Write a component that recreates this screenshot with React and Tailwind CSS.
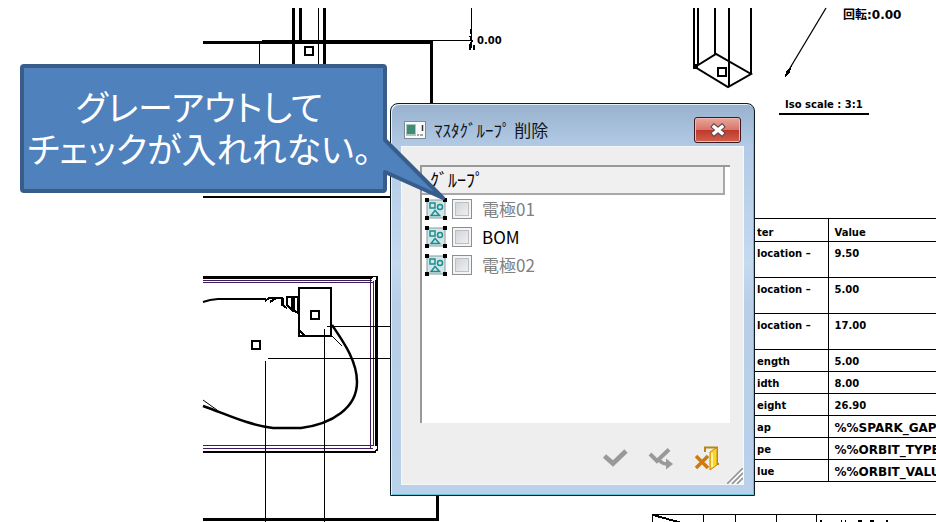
const parameters = [
  ["location –", "9.50", true],
  ["location –", "5.00", true],
  ["location –", "17.00", true],
  ["ength", "5.00", false],
  ["idth", "8.00", false],
  ["eight", "26.90", false],
  ["ap", "%%SPARK_GAP", false],
  ["pe", "%%ORBIT_TYPE", false],
  ["lue", "%%ORBIT_VALU", false],
];

const groups = [
  { id: "g1", name: "電極01", disabled: true },
  { id: "g2", name: "BOM", disabled: false },
  { id: "g3", name: "電極02", disabled: true },
];

function Drawing() {
  return (
    <svg
      className="absolute left-0 top-0"
      width="936"
      height="522"
      viewBox="0 0 936 522"
      fill="none"
      stroke="#000"
      shapeRendering="crispEdges"
      aria-hidden="true"
    >
      {/* front view */}
      <path d="M293.5 8V66M300.5 8V42M324.5 8V66M431.5 41V104" strokeWidth="3" />
      <path d="M318.5 8V66M259.5 42V66M432 40.5H472M471.5 8V48" strokeWidth="1" />
      <path d="M203 42.5H262" strokeWidth="3" />
      <path d="M262 42H433" strokeWidth="4" />
      <path d="M471 29v5M470 36l2 5M472 41l-2 4M470 45v5M474 45v5" strokeWidth="2" />
      <rect x="305" y="47" width="8" height="8" strokeWidth="2" />
      {/* top view */}
      <path d="M203 197H390" strokeWidth="2" />
      <path d="M203 277.5H376.5V451" strokeWidth="3" />
      <path d="M203 452H376" strokeWidth="2" />
      <path d="M203 280.5H375M203 282.5H373M203 445.5H373M203 448.5H375M370.5 279V448M373.5 281V446" stroke="#3f1a5c" strokeWidth="1" />
      <circle cx="374" cy="279" r="2" fill="#fff" stroke="none" />
      <circle cx="375" cy="448" r="2" fill="#fff" stroke="none" />
      <path d="M203 302L210 300L218 299H266" strokeWidth="2" shapeRendering="auto" />
      <path d="M265 301l4-3h13v7l5 3M276 298l-6 4M283 298v8M287 297h5v13l-5-5zM292 297h6M294 298v14M298 296v17l-7-4" strokeWidth="2" />
      <rect x="299" y="288" width="32" height="48" strokeWidth="2" />
      <path d="M299 330l6 6" strokeWidth="2" />
      <rect x="311" y="311" width="8" height="8" strokeWidth="2" />
      <rect x="252" y="341" width="8" height="8" strokeWidth="2" />
      <path d="M332 325C342 340 357 360 357 382C357 408 332 424 301 428H273C248 425 226 414 203 406" strokeWidth="2.5" shapeRendering="auto" />
      <path d="M203 400L217 410M331 335L342 346" strokeWidth="1" shapeRendering="auto" />
      <path d="M327 326.5H390M268 358.5H390M324.5 329V522M265.5 361V522" strokeWidth="1" />
      <path d="M203 519.5H437.5V496" strokeWidth="3" />
      {/* isometric view */}
      <path d="M694 8V66M698 8V65M715 8V54M728.5 8V86M751 8V74" strokeWidth="2" />
      <path d="M695 67L716 54L751 74L728 87Z" strokeWidth="2" shapeRendering="auto" />
      <path d="M693 64h5v5h-5z" fill="#000" stroke="none" />
      <rect x="718" y="68" width="8" height="8" strokeWidth="2" />
      <path d="M826 8L790 68" strokeWidth="1.3" shapeRendering="auto" />
      <path d="M792 66L786 71L785 77L790 72Z" fill="#000" stroke="none" />
      {/* title block */}
      <path d="M652 514.5H936M652.5 514V522M703.5 514V522M735.5 514V522M776.5 514V522M816.5 514V522" strokeWidth="1" />
      <path d="M653 515L682 523" strokeWidth="2" />
      <path d="M820 521h2M841 521h1M845 521h1M858 521h4M870 521h4M886 521h2" strokeWidth="2" />
    </svg>
  );
}

function GroupIcon() {
  return (
    <svg width="22" height="22" viewBox="0 0 22 22" aria-hidden="true">
      <rect x="2" y="2" width="18" height="18" fill="#d3e5e6" stroke="#8a9a9c" />
      <g fill="none" stroke="#1a8f92" strokeWidth="1.5">
        <rect x="5" y="5" width="5" height="5" />
        <circle cx="15" cy="9" r="2.5" />
        <path d="M10 12.5L6 17.5H14.5Z" />
      </g>
      <path d="M0 0h4v4H0zM18 0h4v4h-4zM0 18h4v4H0zM18 18h4v4h-4z" fill="#000" />
    </svg>
  );
}

function Dialog() {
  return (
    <section
      aria-labelledby="dlg-title"
      className="absolute left-[390px] top-[103px] flex h-[393px] w-[365px] flex-col rounded-t-lg border border-[#101c24] bg-[linear-gradient(180deg,#98b1cd_0px,#b3cbe6_44px,#c5daef_160px,#b8cfe7_200px,#b9d1ea_100%)] px-[11px] pb-[11px] shadow-[inset_1px_1px_0_#e6f1fa,inset_-1px_-1px_0_#66c4d8]"
    >
      <header className="flex h-[43px] shrink-0 items-center pt-2">
        <svg width="22" height="18" viewBox="0 0 22 18" className="ml-0.5" aria-hidden="true">
          <rect x="0.5" y="0.5" width="21" height="17" fill="#f8fafb" stroke="#808c94" />
          <rect x="2" y="3" width="10" height="12" fill="#a9c7c4" />
          <rect x="3" y="4" width="8" height="9" fill="#438b70" />
          <path d="M18.5 4v6" stroke="#333" strokeWidth="1.5" />
          <path d="M13 14h2M16 14h3" stroke="#889" strokeWidth="1.5" />
        </svg>
        <h1 id="dlg-title" className="ml-2 text-[17px] leading-6 text-[#10161d]">
          ﾏｽﾀｸﾞﾙｰﾌﾟ 削除
        </h1>
        <button
          type="button"
          aria-label="閉じる"
          className="ml-auto mr-0.5 flex h-[26px] w-[47px] items-center justify-center rounded-[3px] border border-[#3c1a22] bg-[linear-gradient(180deg,#e9a79c_0%,#d9766a_48%,#bd3a2c_52%,#d4604c_100%)] shadow-[inset_0_0_0_1px_#eeb9b0]"
        >
          <svg width="18" height="14" viewBox="0 0 18 14" aria-hidden="true">
            <path d="M3 2L15 12M15 2L3 12" stroke="#5c4a50" strokeWidth="5.5" />
            <path d="M3.8 2.7L14.2 11.3M14.2 2.7L3.8 11.3" stroke="#fff" strokeWidth="3.4" />
          </svg>
        </button>
      </header>

      <div className="flex flex-1 flex-col bg-[#eee] px-[13px] pt-[18px] outline outline-[#f4f8fb]">
        <div className="ml-[5px] h-[258px] border-l-2 border-t-2 border-[#999] bg-white">
          <h2 className="mr-[5px] h-[28px] border-b-2 border-r-2 border-[#a8a8a8] bg-[#f0f0f0] pl-2 text-[18px] leading-6 text-black">
            ｸﾞﾙｰﾌﾟ
          </h2>
          <ul>
            {groups.map((g) => (
              <li key={g.id} className="flex h-7 items-center pl-[3px]">
                <GroupIcon />
                <input
                  id={g.id}
                  type="checkbox"
                  disabled={g.disabled}
                  className="ml-[5px] size-5 appearance-none border border-[#8c8f92] bg-[linear-gradient(135deg,#c9ced4,#f6f6f6)] shadow-[inset_0_0_0_2px_#f4f4f4,inset_0_0_0_3px_#bcc0c4]"
                />
                <label
                  htmlFor={g.id}
                  className={g.disabled ? "ml-2.5 text-[17px] leading-6 text-[#808080]" : "ml-2.5 text-[17px] leading-6 text-black"}
                >
                  {g.name}
                </label>
              </li>
            ))}
          </ul>
        </div>
        <footer className="flex flex-1 items-center justify-end gap-5 pr-2.5 pt-2">
          <button type="button" disabled aria-label="OK">
            <svg width="26" height="26" viewBox="0 0 26 26" aria-hidden="true">
              <path d="M2.5 11L11 18.5L24 6" fill="none" stroke="#999" strokeWidth="4.8" />
            </svg>
          </button>
          <button type="button" disabled aria-label="適用">
            <svg width="26" height="26" viewBox="0 0 26 26" aria-hidden="true">
              <path d="M2 9L9 16L21 4.5" fill="none" stroke="#999" strokeWidth="4" />
              <path d="M10 13C12 17 14 19 19 19" fill="none" stroke="#999" strokeWidth="3.5" />
              <path d="M18 13.5L25 19L18 24.5Z" fill="#999" />
            </svg>
          </button>
          <button type="button" aria-label="キャンセル">
            <svg width="26" height="26" viewBox="0 0 26 26" aria-hidden="true">
              <path d="M11 7V2.5H23V19H25" fill="none" stroke="#b8871c" strokeWidth="2" />
              <path d="M16 7L23 2.5V20L16 25Z" fill="#ffd42a" stroke="#c08a10" />
              <path d="M18 8V22" stroke="#fff09a" strokeWidth="2" />
              <path d="M2 11L14 23M14 11L2 23" stroke="#cf7a10" strokeWidth="3.5" />
            </svg>
          </button>
        </footer>
      </div>
      <svg className="absolute bottom-[11px] right-[11px]" width="16" height="16" viewBox="0 0 16 16" aria-hidden="true">
        <path d="M1 16L16 1M6 16L16 6M11 16L16 11" stroke="#fff" strokeWidth="4" />
        <path d="M0 16L16 0M5 16L16 5M10 16L16 10" stroke="#999" strokeWidth="1.8" />
      </svg>
    </section>
  );
}

function Callout() {
  return (
    <aside className="absolute left-5 top-16 flex h-[129px] w-[367px] items-center justify-center rounded-sm border-4 border-[#385d8a] bg-[#4f81bd] pb-1 pr-2">
      <p className="whitespace-nowrap text-center text-[35px] leading-[42px] text-white [font-feature-settings:'palt']">
        グレーアウトして
        <br />
        チェックが入れれない。
      </p>
      <svg className="absolute left-[357px] top-[68px]" width="68" height="66" viewBox="0 0 68 66" aria-hidden="true">
        <path d="M0 4H4L62 61L4 35H0Z" fill="#4f81bd" />
        <path d="M4 0V4L62 62L4 36V42" fill="none" stroke="#385d8a" strokeWidth="4" strokeLinejoin="round" />
      </svg>
    </aside>
  );
}

export default function App() {
  return (
    <main className="relative h-screen overflow-hidden bg-white font-['Noto_Sans_CJK_JP',sans-serif] text-black">
      <Drawing />

      <div className="font-['DejaVu_Sans','Noto_Sans_CJK_JP',sans-serif] text-[10px] font-bold leading-3">
        <span className="absolute left-[477px] top-[35px]">0.00</span>
        <span className="absolute left-[843px] top-[9px] text-[12px]">回転:0.00</span>
        <span className="absolute left-[779px] top-[99px] whitespace-nowrap border-b-2 border-black px-1.5 pb-0.5">Iso scale : 3:1</span>

        <div className="absolute left-[755px] right-0 top-[218px] overflow-hidden">
          <table className="w-full table-fixed border-collapse whitespace-nowrap text-left">
            <thead>
              <tr className="h-[23px] border-y border-black align-top">
                <th className="w-[73px] border-r border-black pl-0.5 pt-2">ter</th>
                <th className="pl-1.5 pt-2">Value</th>
              </tr>
            </thead>
            <tbody>
              {parameters.map(([name, value, tall], i) => (
                <tr key={i} className={tall ? "h-9 border-b border-black align-top" : "h-[22px] border-b border-black align-top"}>
                  <td className="border-r border-black pl-0.5 pt-1.5">{name}</td>
                  <td className={value.startsWith("%") ? "pl-1.5 pt-1.5 text-[12px] leading-3" : "pl-1.5 pt-1.5"}>{value}</td>
                </tr>
              ))}
            </tbody>
          </table>
        </div>
      </div>

      <Dialog />
      <Callout />
    </main>
  );
}
